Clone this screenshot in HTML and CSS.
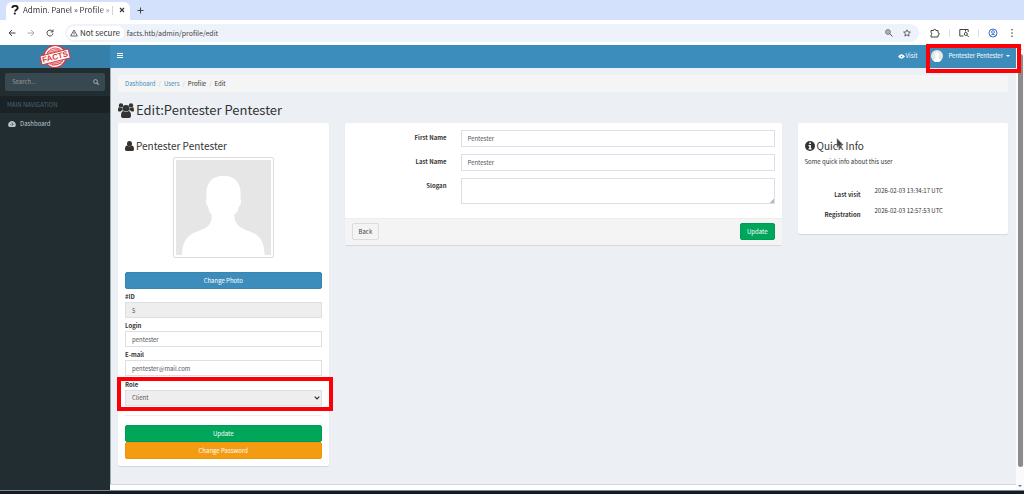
FILE: index.html
```
<!DOCTYPE html>
<html lang="en">
<head>
<meta charset="utf-8">
<title>Admin. Panel » Profile » Edit</title>
<link rel="stylesheet" href="styles.css">
</head>
<body>
<div class="browser">
  <div class="tabstrip">
    <div class="tab">
      <svg class="favicon" viewBox="0 0 8 10"><path d="M1.300 3C1.300 1.400 2.500.8 4 .8s2.700.700 2.700 2.200C6.700 4.700 4.300 4.700 4 6.500" fill="none" stroke="#1c1c1c" stroke-width="1.900"/><circle cx="3.800" cy="8.600" r="1.100" fill="#1c1c1c"/></svg>
      <span class="tab-title">Admin. Panel » Profile » |</span>
      <button class="bare" aria-label="Close tab"><svg class="i6" viewBox="0 0 6 6"><path d="M1 1l4 4M5 1L1 5" stroke="#333" stroke-width="1.100"/></svg></button>
    </div>
    <button class="bare newtab" aria-label="New tab"><svg class="i7" viewBox="0 0 7 7"><path d="M3.500.5v6M.5 3.500h6" stroke="#444"/></svg></button>
  </div>
  <div class="toolbar">
    <button class="bare" aria-label="Back"><svg class="i8" viewBox="0 0 8 8"><path d="M7.500 4H1M4 1L1 4l3 3" fill="none" stroke="#444"/></svg></button>
    <button class="bare" aria-label="Forward"><svg class="i8" viewBox="0 0 8 8"><path d="M.5 4H7M4 1l3 3-3 3" fill="none" stroke="#aaa"/></svg></button>
    <button class="bare" aria-label="Reload"><svg class="i8" viewBox="0 0 8 8"><path d="M6.600 2.500A3 3 0 1 0 7 4.500M7 .6v2.300H4.700" fill="none" stroke="#444"/></svg></button>
    <div class="omnibox">
      <span class="secure"><svg class="i8" viewBox="0 0 8 8"><path d="M4 1L7.400 7H.6zM4 3v2M4 5.500v.8" fill="none" stroke="#444" stroke-width=".8"/></svg>Not secure</span>
      <span class="url">facts.htb/admin/profile/edit</span>
      <svg class="i8" viewBox="0 0 8 8"><circle cx="3" cy="3" r="2.300" fill="none" stroke="#444" stroke-width=".9"/><path d="M4.700 4.700l2.800 2.800M2 3h2" stroke="#444" stroke-width=".9"/></svg>
      <svg class="i8 star" viewBox="0 0 8 8"><path d="M4 .8l1 2.100 2.400.2-1.800 1.600.5 2.400L4 5.900 1.900 7.100l.5-2.400L.6 3.100 3 2.900z" fill="none" stroke="#444" stroke-width=".8"/></svg>
    </div>
    <div class="tools">
      <svg class="i10" viewBox="0 0 10 10"><path d="M1 2.500h2.500a1.200 1.200 0 0 1 2.400 0H8v2.200a1.200 1.200 0 0 1 0 2.400V9H1V7a1.200 1.200 0 0 0 0-2.300z" fill="none" stroke="#444"/></svg>
      <i class="rule"></i>
      <svg class="i10" viewBox="0 0 10 10"><path d="M4.500 8H.8V1.500h8.400V4M6.500 1.500v2" fill="none" stroke="#444"/><circle cx="6.800" cy="6" r="1.500" fill="none" stroke="#444"/><path d="M8 7.200l1.700 1.700" stroke="#444"/></svg>
      <i class="rule"></i>
      <svg class="i10" viewBox="0 0 10 10"><circle cx="5" cy="5" r="4" fill="none" stroke="#3b6fd4"/><circle cx="5" cy="4" r="1.400" fill="none" stroke="#3b6fd4" stroke-width=".9"/><path d="M2.300 7.800c1-1.800 4.400-1.800 5.400 0" fill="none" stroke="#3b6fd4" stroke-width=".9"/></svg>
      <svg class="dots" viewBox="0 0 4 10"><g fill="#444"><circle cx="2" cy="1.800" r=".8"/><circle cx="2" cy="5" r=".8"/><circle cx="2" cy="8.200" r=".8"/></g></svg>
    </div>
  </div>
</div>

<div class="viewport">
  <aside class="sidebar">
    <a class="logo" href="#" aria-label="Facts">
      <svg viewBox="0 0 34 23"><g transform="rotate(-14 17 11.500)"><circle cx="17" cy="11.500" r="11" fill="#fff" stroke="#d93a3f" stroke-width="1.200"/><circle cx="17" cy="11.500" r="8.500" fill="#f6d5d6" stroke="#d93a3f" stroke-width=".7"/><path d="M10 6.500h14M11 5h12M10 18h14M12 19.500h10" stroke="#d93a3f" stroke-width=".6"/><rect x="2.500" y="7.500" width="29" height="9" fill="#fff" stroke="#d93a3f"/><text x="17" y="14.600" text-anchor="middle" class="stamp">FACTS</text></g></svg>
    </a>
    <form class="search"><input type="text" placeholder="Search..." aria-label="Search"><button class="bare" type="button" aria-label="Search"><svg class="i6" viewBox="0 0 6 6"><circle cx="2.500" cy="2.500" r="1.900" fill="none" stroke="#aaa"/><path d="M3.900 3.900l1.800 1.800" stroke="#aaa" stroke-width="1.200"/></svg></button></form>
    <div class="nav-head">MAIN NAVIGATION</div>
    <a class="nav-item" href="#"><svg class="i8" viewBox="0 0 8 8"><path d="M1 7a3.700 3.700 0 1 1 6 0z" fill="#b8c7ce"/><path d="M4 5.800l.8-2.800M2 4.500h.6M5.600 4.500h.6M3 2.800h.6" stroke="#222d32" stroke-width=".7"/></svg>Dashboard</a>
  </aside>

  <div class="page">
    <header class="navbar">
      <button class="bare menu" aria-label="Toggle navigation"><svg class="i6" viewBox="0 0 6 6"><path d="M0 .5h6M0 2.500h6M0 4.500h6" stroke="#fff"/></svg></button>
      <a class="visit" href="#"><svg class="eye" viewBox="0 0 7 5"><path d="M0 2.500Q3.500-1.800 7 2.500 3.500 6.800 0 2.500z" fill="#fff"/><circle cx="3.500" cy="2.500" r=".8" fill="#3c8dbc"/></svg>Visit</a>
      <button class="user"><svg class="avatar" viewBox="0 0 12 12"><circle cx="6" cy="6" r="6" fill="#e6e6e6"/><path d="M2.300 10.800c0-2 2.400-1.800 2.400-3.300C3.800 6 3.500 2 6 2s2.200 4 1.300 5.500c0 1.500 2.400 1.300 2.400 3.300A6 6 0 0 1 2.300 10.800z" fill="#fff"/></svg>Pentester Pentester<i class="caret"></i><span class="mark mark-user"></span></button>
    </header>

    <main class="content">
      <nav class="crumbs"><a href="#">Dashboard</a><i>/</i><a href="#">Users</a><i>/</i><span>Profile</span><i>/</i><span>Edit</span></nav>
      <h1><svg class="group" viewBox="0 0 16 15"><g fill="#333"><circle cx="8" cy="5.200" r="3.300"/><circle cx="3" cy="2.400" r="2.200"/><circle cx="13" cy="2.400" r="2.200"/><path d="M5 15C3.400 15 3 14 3 12.800 3 10 3.600 8 5.400 7.900c1.500 1.400 3.700 1.400 5.200 0C12.400 8 13 10 13 12.800c0 1.200-.4 2.200-2 2.200zM0 7.500C0 4.800.6 4.300 1.400 4.300c.9.700 2 .8 2.900.4.1 1.200.3 1.800.9 2.500-1.200 0-2 .5-2.700 1.400H1C.4 8.600 0 8.200 0 7.500zM16 7.500c0-2.700-.6-3.200-1.400-3.200-.9.700-2 .8-2.900.4-.1 1.200-.3 1.800-.9 2.500 1.200 0 2 .5 2.700 1.400H15c.6 0 1-.4 1-1.100z"/></g></svg>Edit:Pentester Pentester</h1>

      <div class="row">
        <div class="col side">
          <form class="box profile">
            <h2><svg class="person" viewBox="0 0 9 10"><path d="M4.500 0a2.500 2.700 0 0 1 0 5.400A2.500 2.700 0 0 1 4.500 0zM2 4.600c1.400 1.500 3.600 1.500 5 0C8.600 4.800 9 6.600 9 8.300 9 9.300 8.400 10 7.500 10h-6C.6 10 0 9.300 0 8.300c0-1.700.4-3.500 2-3.700z" fill="#333"/></svg>Pentester Pentester</h2>
            <svg class="photo" viewBox="0 0 96 96"><rect width="96" height="96" fill="#e6e6e6"/><path d="M6 96C6.500 82 11 76 22 72c8-3 14-6 14-14V55C33 52 33 50 32.500 47 30 45 29.500 41 31 39.500 29 24 36 16 48 16s19 8 17 23.500c1.500 1.500 1 5.500-1.500 7.500-.5 3-.5 5-4.500 8v3c1 8 7 11 15 14 11 4 15 10 15.500 24z" fill="#fff"/></svg>
            <button class="btn blue" type="button">Change Photo</button>
            <div class="field"><label for="id">#ID</label><input id="id" value="5" disabled></div>
            <div class="field"><label for="login">Login</label><input id="login" value="pentester"></div>
            <div class="field"><label for="mail">E-mail</label><input id="mail" value="pentester@mail.com"></div>
            <div class="field role"><label for="role">Role</label><div class="select"><select id="role" disabled><option>Client</option></select><svg class="chev" viewBox="0 0 6 4"><path d="M.7.7L3 3 5.300.7" fill="none" stroke="#333" stroke-width="1.200"/></svg></div><span class="mark mark-role"></span></div>
            <hr>
            <button class="btn green" type="button">Update</button>
            <button class="btn orange" type="button">Change Password</button>
          </form>
        </div>

        <div class="col mid">
          <form class="box">
            <div class="fields">
              <label for="first">First Name</label><input id="first" value="Pentester">
              <label for="last">Last Name</label><input id="last" value="Pentester">
              <label for="slogan">Slogan</label><textarea id="slogan"></textarea>
            </div>
            <div class="box-foot"><button class="btn plain" type="button">Back</button><button class="btn green" type="button">Update</button></div>
          </form>
        </div>

        <div class="col side">
          <section class="box info">
            <h2><svg class="i10" viewBox="0 0 10 10"><circle cx="5" cy="5" r="5" fill="#333"/><path d="M4.200 1.400h1.700v1.500H4.200zM3.500 4h2.400v3.200h.7v1.200h-3V7.200h.7V5.200h-.8z" fill="#fff"/></svg>Quick Info</h2>
            <p>Some quick info about this user</p>
            <dl><dt>Last visit</dt><dd>2026-02-03 13:34:17 UTC</dd><dt>Registration</dt><dd>2026-02-03 12:57:53 UTC</dd></dl>
            <svg class="pointer" viewBox="0 0 8 11"><path d="M1 .5v9l2-2 1.500 3 1.300-.6-1.400-3h2.800z" fill="#444" stroke="#888" stroke-width=".5"/></svg>
          </section>
        </div>
      </div>
    </main>
    <footer></footer>
  </div>
  <div class="scroll"><i class="up"></i><i class="thumb"></i><i class="down"></i></div>
</div>
<div class="taskbar"></div>
</body>
</html>
```
FILE: styles.css
```
* { box-sizing: border-box; }
body {
  margin: 0;
  height: 100vh;
  display: flex;
  flex-direction: column;
  overflow: hidden;
  font: 6px/8px "Noto Sans CJK SC", "Noto Sans", sans-serif;
  color: #333;
}
svg { display: block; flex: none; }
a { color: #3c8dbc; text-decoration: none; }
i { font-style: normal; }
button, input, select, textarea { font: inherit; color: inherit; margin: 0; }
.bare { background: none; border: 0; padding: 0; }
.i6 { width: 6px; height: 6px; }
.i7 { width: 7px; height: 7px; }
.i8 { width: 8px; height: 8px; }
.i10 { width: 10px; height: 10px; }

.browser { flex: none; font-size: 8px; line-height: 12px; }
.tabstrip { height: 20px; background: #d3e1fd; display: flex; align-items: center; gap: 7px; padding-left: 6px; }
.tab { width: 124px; height: 18px; align-self: flex-end; background: #fff; border-radius: 6px 6px 0 0; display: flex; align-items: center; padding: 0 5px 2px; }
.favicon { width: 8px; height: 10px; margin-right: 4px; }
.tab-title { flex: 1; white-space: nowrap; color: transparent; background: linear-gradient(90deg, #333 78%, #ddd); -webkit-background-clip: text; background-clip: text; }
.toolbar { height: 25px; background: #fff; display: flex; align-items: center; gap: 11px; padding: 0 10px 0 8px; }
.omnibox { flex: 1; height: 18px; border-radius: 9px; background: #edf2fb; display: flex; align-items: center; gap: 9px; padding: 0 8px 0 2px; }
.secure { display: flex; align-items: center; gap: 2px; background: #fff; height: 14px; border-radius: 7px; padding: 0 4px 0 3px; margin-right: -6px; }
.url { flex: 1; color: #444; font-size: 7px; }
.star { margin-left: 1px; }
.tools { display: flex; align-items: center; gap: 9px; }
.rule { width: 1px; height: 8px; background: #d3e1fd; }
.dots { width: 4px; height: 10px; margin-left: 3px; }

.viewport { flex: 1; min-height: 0; display: flex; }
.sidebar { flex: none; width: 110px; background: #222d32; }
.logo { display: flex; justify-content: center; height: 23px; background: #367fa9; }
.logo svg { width: 34px; height: 23px; }
.stamp { font: bold 8px "Liberation Sans", sans-serif; fill: #d93a3f; }
.search { display: flex; align-items: center; height: 18px; margin: 5px; padding-right: 6px; border-radius: 2px; background: #374850; }
.search input { flex: 1; min-width: 0; border: 0; background: none; padding: 0 7px; color: #999; outline: 0; }
.search input::placeholder { color: #999; }
.nav-head { height: 17px; padding: 0 7px; line-height: 17px; background: #1a2226; color: #4b646f; }
.nav-item { display: flex; align-items: center; gap: 4px; height: 21px; padding: 0 8px; color: #b8c7ce; }

.page { flex: 1; min-width: 0; display: flex; flex-direction: column; background: #ecf0f5; }
.navbar { height: 23px; flex: none; display: flex; align-items: center; background: #3c8dbc; color: #fff; padding: 0 6px 1px 7px; }
.menu { margin-right: auto; }
.visit { display: flex; align-items: center; gap: 1px; color: #fff; }
.eye { width: 7px; height: 5px; }
.user { position: relative; display: flex; align-items: center; height: 22px; margin-left: 14px; padding: 0; border: 0; background: none; color: #fff; }
.avatar { width: 12px; height: 12px; margin-right: 5px; }
.caret { margin-left: 3px; border: 2px solid transparent; border-top-color: #fff; border-bottom: 0; }
.mark { position: absolute; border: 4px solid #fb0007; pointer-events: none; }
.mark-user { inset: -1px -11px -6px -5px; z-index: 2; }
.mark-role { inset: -4px -11px -5px -8px; }

.content { flex: 1; min-height: 0; padding: 7px 8px 0; box-shadow: inset 1px 0 #a4abb0; }
.crumbs { display: flex; height: 17px; align-items: center; padding: 0 7px; background: #f5f5f5; border-radius: 2px; }
.crumbs i { padding: 0 3px; color: #ccc; }
h1, h2 { display: flex; align-items: center; margin: 0; font-weight: 400; }
h1 { height: 31px; padding-top: 5px; gap: 2px; font-size: 13px; line-height: 20px; }
.group { width: 16px; height: 15px; }
.person { width: 9px; height: 10px; }
h2 { gap: 2px; font-size: 10px; line-height: 16px; }
.row { display: flex; align-items: flex-start; margin: 0 -8px; }
.col { padding: 0 8px; }
.side { width: 25%; }
.mid { width: 50%; }
.box { position: relative; background: #fff; border-radius: 2px; box-shadow: 0 1px 1px rgba(0, 0, 0, .1); }
.profile { display: flex; flex-direction: column; padding: 15px 7px 7px; }
.photo { width: 101px; height: 101px; padding: 2px; border: 1px solid #ddd; border-radius: 2px; margin: 3px auto 14px; }
.btn { height: 17px; padding: 0 6px; border: 1px solid; border-radius: 2px; line-height: 14px; color: #fff; }
.blue { background: #3c8dbc; border-color: #3885b2; }
.green { background: #00a65a; border-color: #009b54; }
.orange { background: #f39c12; border-color: #ea950e; }
.plain { background: #f4f4f4; border-color: #ddd; color: #444; }
label, dt { font-weight: 700; }
.field { position: relative; margin-top: 4px; }
.field label { display: block; line-height: 8px; margin-bottom: 1px; }
.role { margin-top: 5px; }
.field input, .fields input, .fields textarea, select { display: block; width: 100%; height: 17px; padding: 0 6px; border: 1px solid #dcdfe6; border-radius: 0; background: #fff; color: #555; outline: 0; }
.field input, .field select { height: 16px; }
.field input:disabled, select:disabled { background: #eee; color: #555; opacity: 1; }
.select { position: relative; }
select { appearance: none; }
.chev { position: absolute; right: 2px; top: 6px; width: 6px; height: 4px; }
hr { width: 100%; margin: 9px 0; border: 0; border-top: 1px solid #eee; }
.fields { display: grid; grid-template-columns: 95px 1fr; gap: 7px 14px; padding: 7px 7px 14px; }
.fields label { text-align: right; padding-top: 4px; }
.fields textarea { height: 26px; resize: vertical; }
.fields textarea::-webkit-resizer { background: linear-gradient(135deg, transparent 84%, #bbb 84%); }
.box-foot { display: flex; justify-content: space-between; padding: 4px 7px 5px; background: #f4f4f4; border-top: 1px solid #eee; }
.info { padding: 15px 7px 0; }
.info p { margin: 4px 0 0; }
.info dl { display: grid; grid-template-columns: 56px 1fr; gap: 0 14px; margin: 0; padding: 21px 0 7px; }
dt { text-align: right; height: 20px; padding-top: 4px; }
dd { margin: 0; white-space: nowrap; }
.pointer { position: absolute; left: 38px; top: 15px; width: 8px; height: 11px; }
footer { flex: none; height: 6px; background: #fff; border-top: 1px solid #d2d6de; }
.scroll { flex: none; width: 8px; background: #fafafa; display: flex; flex-direction: column; align-items: center; padding: 3px 0; gap: 4px; }
.thumb { flex: 1; width: 5px; background: #8b8b8b; border-radius: 3px; margin-bottom: 14px; }
.up, .down { border: 2px solid transparent; }
.up { border-bottom-color: #777; border-top: 0; }
.down { border-top-color: #777; border-bottom: 0; }
.taskbar { flex: none; height: 4px; background: #101b2d; border-top: 1px solid #888; }
```
